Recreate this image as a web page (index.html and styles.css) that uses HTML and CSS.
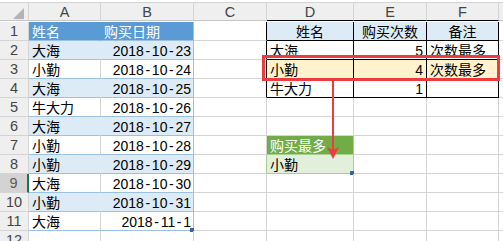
FILE: index.html
```html
<!DOCTYPE html>
<html lang="zh">
<head>
<meta charset="utf-8">
<title>Sheet</title>
<link rel="stylesheet" href="styles.css">
</head>
<body>
<div class="sheet">
  <!-- column header row -->
  <div class="ch corner"><svg class="tri" width="12" height="11" viewBox="0 0 12 11"><polygon points="11,0 11,11 0,11" fill="#b4b4b4"/></svg></div>
  <div class="ch">A</div>
  <div class="ch">B</div>
  <div class="ch">C</div>
  <div class="ch kb">D</div>
  <div class="ch kb">E</div>
  <div class="ch kb">F</div>
  <div class="ch last"></div>

  <!-- row 1 -->
  <div class="rh">1</div>
  <div class="c thb sa">姓名</div>
  <div class="c thb sb">购买日期</div>
  <div class="c kr"></div>
  <div class="c k kh ctr">姓名</div>
  <div class="c k kh ctr">购买次数</div>
  <div class="c k kh ctr">备注</div>
  <div class="c last"></div>

  <!-- row 2 -->
  <div class="rh">2</div>
  <div class="c band sa">大海</div>
  <div class="c band sb r">2018<span class="h">-</span>10<span class="h">-</span>23</div>
  <div class="c kr"></div>
  <div class="c k">大海</div>
  <div class="c k r">5</div>
  <div class="c k">次数最多</div>
  <div class="c last"></div>

  <!-- row 3 -->
  <div class="rh">3</div>
  <div class="c tw sa">小勤</div>
  <div class="c tw sb r">2018<span class="h">-</span>10<span class="h">-</span>24</div>
  <div class="c kr"></div>
  <div class="c k hl">小勤</div>
  <div class="c k hl r">4</div>
  <div class="c k hl">次数最多</div>
  <div class="c last"></div>

  <!-- row 4 -->
  <div class="rh">4</div>
  <div class="c band sa">大海</div>
  <div class="c band sb r">2018<span class="h">-</span>10<span class="h">-</span>25</div>
  <div class="c kr"></div>
  <div class="c k">牛大力</div>
  <div class="c k r">1</div>
  <div class="c k"></div>
  <div class="c last"></div>

  <!-- row 5 -->
  <div class="rh">5</div>
  <div class="c tw sa">牛大力</div>
  <div class="c tw sb r">2018<span class="h">-</span>10<span class="h">-</span>26</div>
  <div class="c"></div>
  <div class="c"></div>
  <div class="c"></div>
  <div class="c"></div>
  <div class="c last"></div>

  <!-- row 6 -->
  <div class="rh">6</div>
  <div class="c band sa">大海</div>
  <div class="c band sb r">2018<span class="h">-</span>10<span class="h">-</span>27</div>
  <div class="c"></div>
  <div class="c"></div>
  <div class="c"></div>
  <div class="c"></div>
  <div class="c last"></div>

  <!-- row 7 -->
  <div class="rh">7</div>
  <div class="c tw sa">小勤</div>
  <div class="c tw sb r">2018<span class="h">-</span>10<span class="h">-</span>28</div>
  <div class="c"></div>
  <div class="c g1">购买最多</div>
  <div class="c"></div>
  <div class="c"></div>
  <div class="c last"></div>

  <!-- row 8 -->
  <div class="rh">8</div>
  <div class="c band sa">小勤</div>
  <div class="c band sb r">2018<span class="h">-</span>10<span class="h">-</span>29</div>
  <div class="c gl"></div>
  <div class="c g2">小勤<span class="handle"></span></div>
  <div class="c"></div>
  <div class="c"></div>
  <div class="c last"></div>

  <!-- row 9 -->
  <div class="rh sel">9</div>
  <div class="c tw sa">大海</div>
  <div class="c tw sb r">2018<span class="h">-</span>10<span class="h">-</span>30</div>
  <div class="c"></div>
  <div class="c"></div>
  <div class="c"></div>
  <div class="c"></div>
  <div class="c last"></div>

  <!-- row 10 -->
  <div class="rh">10</div>
  <div class="c band sa">小勤</div>
  <div class="c band sb r">2018<span class="h">-</span>10<span class="h">-</span>31</div>
  <div class="c"></div>
  <div class="c"></div>
  <div class="c"></div>
  <div class="c"></div>
  <div class="c last"></div>

  <!-- row 11 -->
  <div class="rh">11</div>
  <div class="c tw sa">大海</div>
  <div class="c tw sb r">2018<span class="h">-</span>11<span class="h">-</span>1<span class="handle"></span></div>
  <div class="c"></div>
  <div class="c"></div>
  <div class="c"></div>
  <div class="c"></div>
  <div class="c last"></div>

  <!-- row 12 -->
  <div class="rh">12</div>
  <div class="c"></div>
  <div class="c"></div>
  <div class="c"></div>
  <div class="c"></div>
  <div class="c"></div>
  <div class="c"></div>
  <div class="c last"></div>

  <!-- overlays -->
  <div class="redbox"></div>
  <svg class="arrow" width="16" height="80" viewBox="0 0 16 80">
    <rect x="7" y="0" width="2" height="70" fill="#ee3b3f"/>
    <polygon points="2,66 8,69 14,66 8,78" fill="#ee3b3f"/>
  </svg>
</div>
</body>
</html>
```

FILE: styles.css
```css
html, body {
  margin: 0;
  padding: 0;
  background: #ffffff;
  overflow: hidden;
}

.sheet {
  position: relative;
  margin-top: 2px;
  display: grid;
  grid-template-columns: 29px 72px 93px 73px 87px 73px 72px 1fr;
  grid-auto-rows: 19px;
  font-family: "Liberation Sans", "Noto Sans CJK SC", sans-serif;
  font-size: 14px;
  color: #000000;
  border-top: 1px solid #d4d4d4;
}

.ch {
  box-sizing: border-box;
  background: #efefef;
  border-right: 1px solid #d4d4d4;
  border-bottom: 1px solid #c6c6c6;
  color: #444444;
  text-align: center;
  line-height: 18px;
  font-size: 14.5px;
  height: 18px;
}

.ch.corner {
  position: relative;
  display: flex;
  justify-content: flex-end;
  align-items: flex-end;
  padding: 0 2px 1px 0;
}

.tri {
  display: block;
  margin-right: 1px;
}

.ch.kb {
  border-bottom-color: #000000;
}

.ch.last {
  border-right: none;
}

.sheet > .ch:nth-child(-n+8) {
  grid-row: 1;
}

.rh {
  box-sizing: border-box;
  background: #efefef;
  border-right: 1px solid #d4d4d4;
  border-bottom: 1px solid #d4d4d4;
  color: #444444;
  text-align: center;
  line-height: 19px;
  font-size: 14.5px;
}

.rh.sel {
  background: #d3d3d3;
  color: #5a5a5a;
  border-right: 2px solid #217346;
}

.c {
  position: relative;
  box-sizing: border-box;
  border-right: 1px solid #d4d4d4;
  border-bottom: 1px solid #d4d4d4;
  line-height: 18px;
  padding: 1px 3px 0 3px;
  white-space: nowrap;
  overflow: visible;
}

.c.last {
  border-right: none;
}

.r {
  text-align: right;
  padding-right: 2px;
}

.k.r {
  padding-right: 3px;
}

.ctr {
  text-align: center;
  padding-left: 0;
  padding-right: 0;
}

.h {
  display: inline-block;
  width: 8px;
  text-align: center;
}

/* left data table A:B */
.thb {
  background: #5b9bd5;
  color: #ffffff;
  border-bottom-color: #9bc2e6;
}

.thb.sa {
  border-right-color: #5b9bd5;
}

.band {
  background: #ddebf7;
  border-bottom-color: #9bc2e6;
}

.band.sa {
  border-right-color: #ddebf7;
}

.tw {
  border-bottom-color: #9bc2e6;
}

.sb {
  border-right-color: #9bc2e6;
}

/* right table D:F */
.kr {
  border-right-color: #000000;
}

.k {
  border-right-color: #000000;
  border-bottom-color: #000000;
}

.kh {
  background: #ddebf7;
}

.hl {
  background: #fff2cc;
}

/* result cells */
.g1 {
  background: #70ad47;
  color: #ffffff;
  border-bottom-color: #a9d08e;
  border-right-color: #a9d08e;
}

.g2 {
  background: #e2efda;
  border-bottom-color: #a9d08e;
  border-right-color: #a9d08e;
}

.gl {
  border-right-color: #a9d08e;
}

.handle {
  position: absolute;
  right: -1px;
  bottom: -2px;
  width: 4px;
  height: 4px;
  background: #3b5fa8;
}

/* overlays */
.redbox {
  position: absolute;
  left: 262px;
  top: 52px;
  width: 238px;
  height: 26px;
  box-sizing: border-box;
  border: 3px solid #ee3b3f;
  pointer-events: none;
}

.arrow {
  position: absolute;
  left: 325px;
  top: 78px;
}
```
